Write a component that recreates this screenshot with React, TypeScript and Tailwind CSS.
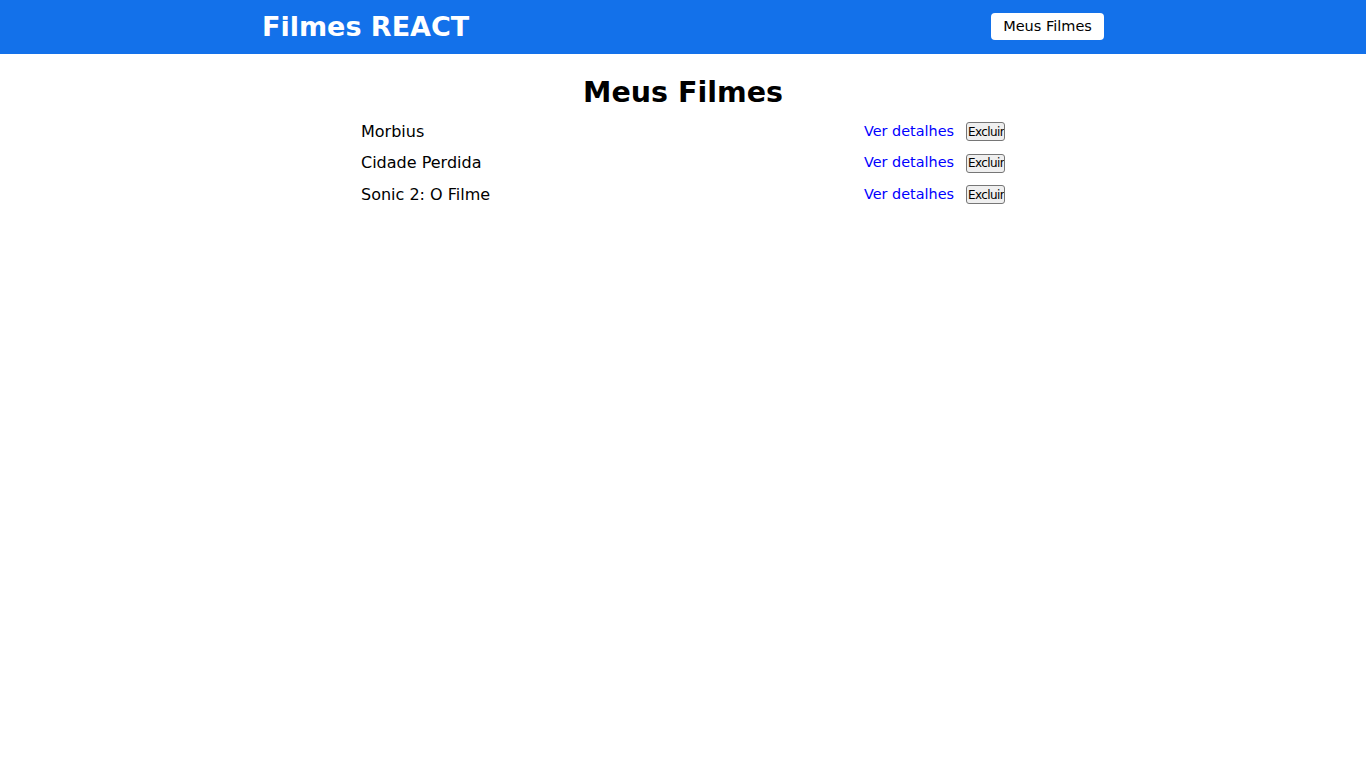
const filmes = [
  { id: 1, title: "Morbius" },
  { id: 2, title: "Cidade Perdida" },
  { id: 3, title: "Sonic 2: O Filme" },
];

export default function App() {
  return (
    <div className="min-h-screen bg-white text-black font-['DejaVu_Sans',sans-serif]">
      <header className="h-[54px] bg-[#1371ea] flex items-center">
        <div className="w-[842px] mx-auto flex items-center justify-between">
          <a href="#" className="text-[27px] font-bold text-white leading-none -mt-[1px]">
            Filmes REACT
          </a>
          <a
            href="#"
            className="h-[27px] w-[113px] -mt-[1px] flex items-center justify-center bg-white rounded-[4px] text-[14.5px] text-black"
          >
            Meus Filmes
          </a>
        </div>
      </header>

      <main className="w-[644px] mx-auto">
        <h1 className="mt-[20px] text-[28.5px] leading-[37px] font-bold text-center">Meus Filmes</h1>
        <ul className="mt-[5px]">
          {filmes.map((filme) => (
            <li key={filme.id} className="h-[31.5px] flex items-center justify-between">
              <span className="text-[16px]">{filme.title}</span>
              <div className="flex items-center gap-3">
                <a href="#" className="text-[14.4px] text-[#0000ff]">
                  Ver detalhes
                </a>
                <button className="w-[39px] h-[19px] overflow-hidden whitespace-nowrap text-left pl-[1px] text-[12px] tracking-[-0.6px] leading-none bg-[#efefef] border border-[#767676] rounded-[3px]">
                  Excluir
                </button>
              </div>
            </li>
          ))}
        </ul>
      </main>
    </div>
  );
}
